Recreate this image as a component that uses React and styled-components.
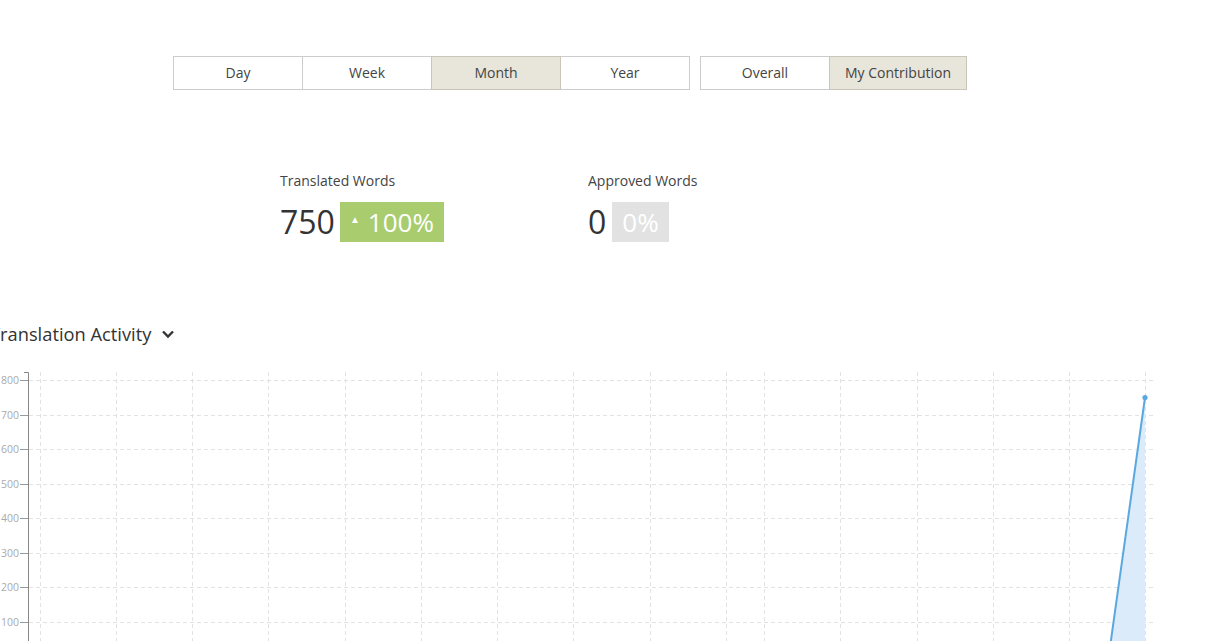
import React from "react";
import styled, { createGlobalStyle } from "styled-components";

const GlobalStyle = createGlobalStyle`
  html, body {
    margin: 0;
    padding: 0;
    background: #fff;
    overflow: hidden;
  }
  body {
    font-family: "Open Sans", "Liberation Sans", sans-serif;
    color: #333;
  }
`;

const Page = styled.div`
  width: 1216px;
  height: 641px;
  overflow: hidden;
`;

const Toolbar = styled.div`
  display: flex;
  gap: 10px;
  padding: 56px 0 0 173px;
`;

const Group = styled.div`
  display: flex;
`;

const Btn = styled.button`
  width: ${(p) => p.w || 130}px;
  height: 34px;
  margin-left: -1px;
  background: ${(p) => (p.active ? "#e8e5da" : "#fff")};
  border: 1px solid ${(p) => (p.active ? "#c9c5b8" : "#ccc")};
  position: relative;
  z-index: ${(p) => (p.active ? 1 : 0)};
  font-family: "Open Sans", sans-serif;
  font-size: 14px;
  color: #444;
  padding: 0 0 2px;
  cursor: pointer;
  &:first-child {
    margin-left: 0;
  }
`;

const Stats = styled.div`
  display: flex;
  margin-top: 81px;
  padding-left: 280px;
`;

const Stat = styled.div`
  width: ${(p) => p.w}px;
`;

const StatLabel = styled.div`
  font-size: 14px;
  line-height: 20px;
  color: #444;
`;

const StatRow = styled.div`
  display: flex;
  align-items: center;
  gap: ${(p) => p.gap || 5}px;
  margin-top: 11px;
  height: 40px;
`;

const Value = styled.span`
  font-size: 32px;
  line-height: 40px;
  color: #333;
`;

const Badge = styled.span`
  display: inline-flex;
  align-items: center;
  height: 40px;
  padding: 0 10px;
  background: ${(p) => p.bg};
  color: #fff;
  font-size: 26px;
`;

const Arrow = styled.span`
  font-size: 10px;
  margin-right: 8px;
  position: relative;
  top: -3px;
`;

const Title = styled.h2`
  display: flex;
  align-items: center;
  gap: 10px;
  margin: 80px 0 0 -10px;
  font-size: 18.3px;
  line-height: 24px;
  font-weight: 500;
  color: #333;
`;

const Chart = styled.svg`
  display: block;
  margin-top: 14px;
`;

const vLines = [40, 116, 192, 268, 345, 421, 497, 573, 650, 726, 764, 840, 917, 993, 1069, 1145];
const ticks = [800, 700, 600, 500, 400, 300, 200, 100];
const tickY = (v) => 20 + ((800 - v) / 100) * 34.57;

function ActivityChart() {
  return (
    <Chart width="1216" height="281" viewBox="0 0 1216 281">
      {vLines.map((x) => (
        <line key={x} x1={x + 0.5} x2={x + 0.5} y1="12" y2="281" stroke="#e2e2e2" strokeDasharray="4 3" />
      ))}
      {ticks.map((v) => (
        <g key={v}>
          <line x1="29" x2="1155" y1={Math.round(tickY(v)) + 0.5} y2={Math.round(tickY(v)) + 0.5} stroke="#e2e2e2" strokeDasharray="4 3" />
          <line x1="20" x2="28" y1={Math.round(tickY(v)) + 0.5} y2={Math.round(tickY(v)) + 0.5} stroke="#999" />
          <text x="19" y={Math.round(tickY(v)) + 4} textAnchor="end" fontSize="10.5" fill="#aaa" fontFamily="Open Sans, sans-serif">
            {v}
          </text>
        </g>
      ))}
      <path d="M28.5 281 V12.5 H24" fill="none" stroke="#888" />
      <path d="M1104 330 L1145 37.5 L1145 330 Z" fill="#dcebf9" />
      <line x1="1104" y1="330" x2="1145" y2="37.5" stroke="#5aa8e0" strokeWidth="2" />
      <circle cx="1145" cy="37.5" r="2.6" fill="#5aa8e0" />
    </Chart>
  );
}

export default function App() {
  return (
    <Page>
      <GlobalStyle />
      <Toolbar>
        <Group>
          <Btn w={130}>Day</Btn>
          <Btn w={130}>Week</Btn>
          <Btn w={130} active>Month</Btn>
          <Btn w={130}>Year</Btn>
        </Group>
        <Group>
          <Btn w={130}>Overall</Btn>
          <Btn w={138} active>My Contribution</Btn>
        </Group>
      </Toolbar>
      <Stats>
        <Stat w={308}>
          <StatLabel>Translated Words</StatLabel>
          <StatRow>
            <Value>750</Value>
            <Badge bg="#a8cc6e">
              <Arrow>▲</Arrow>100%
            </Badge>
          </StatRow>
        </Stat>
        <Stat w={200}>
          <StatLabel>Approved Words</StatLabel>
          <StatRow gap={6}>
            <Value>0</Value>
            <Badge bg="#e2e2e2">0%</Badge>
          </StatRow>
        </Stat>
      </Stats>
      <Title>
        Translation Activity
        <svg width="14" height="10" viewBox="0 0 14 10">
          <path d="M2 2.5 L7 7.5 L12 2.5" fill="none" stroke="#333" strokeWidth="2.4" />
        </svg>
      </Title>
      <ActivityChart />
    </Page>
  );
}
